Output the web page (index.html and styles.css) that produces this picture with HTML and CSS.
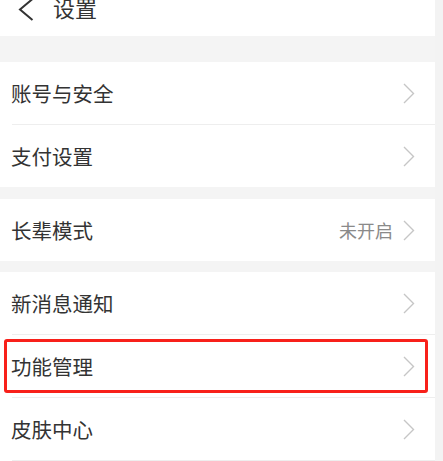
FILE: index.html
```html
<!DOCTYPE html>
<html lang="zh-CN">
<head>
<meta charset="utf-8">
<title>设置</title>
<link rel="stylesheet" href="styles.css">
</head>
<body>
<div class="screen">
  <main class="page">
    <header class="topbar">
      <svg class="back" width="16" height="22" viewBox="0 0 16 22">
        <polyline points="14.5,-1 2,9.5 14.5,20" fill="none" stroke="#333" stroke-width="2"/>
      </svg>
      <h1 class="title">设置</h1>
    </header>
    <div class="gap gap-top"></div>
    <section class="group">
      <div class="row"><span class="label">账号与安全</span><span class="right"><svg class="chev" width="12" height="21" viewBox="0 0 12 21"><polyline points="1,1 10.5,10.5 1,20" fill="none" stroke="#c6c6c6" stroke-width="1.4"/></svg></span></div>
      <div class="divider"></div>
      <div class="row"><span class="label">支付设置</span><span class="right"><svg class="chev" width="12" height="21" viewBox="0 0 12 21"><polyline points="1,1 10.5,10.5 1,20" fill="none" stroke="#c6c6c6" stroke-width="1.4"/></svg></span></div>
    </section>
    <div class="gap"></div>
    <section class="group">
      <div class="row"><span class="label">长辈模式</span><span class="right"><span class="value">未开启</span><svg class="chev" width="12" height="21" viewBox="0 0 12 21"><polyline points="1,1 10.5,10.5 1,20" fill="none" stroke="#c6c6c6" stroke-width="1.4"/></svg></span></div>
    </section>
    <div class="gap gap-sm"></div>
    <section class="group">
      <div class="row"><span class="label">新消息通知</span><span class="right"><svg class="chev" width="12" height="21" viewBox="0 0 12 21"><polyline points="1,1 10.5,10.5 1,20" fill="none" stroke="#c6c6c6" stroke-width="1.4"/></svg></span></div>
      <div class="divider"></div>
      <div class="row highlighted"><span class="label">功能管理</span><span class="right"><svg class="chev" width="12" height="21" viewBox="0 0 12 21"><polyline points="1,1 10.5,10.5 1,20" fill="none" stroke="#c6c6c6" stroke-width="1.4"/></svg></span><span class="mark"></span></div>
      <div class="divider"></div>
      <div class="row"><span class="label">皮肤中心</span><span class="right"><svg class="chev" width="12" height="21" viewBox="0 0 12 21"><polyline points="1,1 10.5,10.5 1,20" fill="none" stroke="#c6c6c6" stroke-width="1.4"/></svg></span></div>
      <div class="divider"></div>
    </section>
  </main>
  <aside class="edge"></aside>
</div>
</body>
</html>
```

FILE: styles.css
```css
* { box-sizing: border-box; }
html, body {
  margin: 0;
  padding: 0;
  background: #f4f4f4;
  font-family: "Noto Sans CJK SC", "Noto Sans", sans-serif;
  color: #333;
  overflow: hidden;
}
.screen {
  display: flex;
  width: 443px;
  height: 461px;
  overflow: hidden;
}
.page {
  width: 435px;
  flex: none;
  display: flex;
  flex-direction: column;
  background: #f4f4f4;
}
.edge {
  flex: 1;
  background: #f3f3f3;
}
.topbar {
  height: 36px;
  background: #fff;
  display: flex;
  align-items: flex-start;
  padding-left: 18px;
  overflow: hidden;
}
.back {
  flex: none;
  margin-top: 0;
}
.title {
  margin: -4px 0 0 19px;
  font-size: 22px;
  line-height: 22px;
  font-weight: 400;
  color: #333;
}
.gap { height: 12px; flex: none; }
.gap-top { height: 26px; }
.gap-sm { height: 11px; }
.group {
  background: #fff;
  display: flex;
  flex-direction: column;
}
.row {
  position: relative;
  height: 62px;
  display: flex;
  align-items: center;
  justify-content: space-between;
  padding: 0 20px 0 11px;
}
.label {
  font-size: 20.5px;
  color: #333;
  line-height: 1;
}
.right {
  display: flex;
  align-items: center;
}
.value {
  font-size: 18px;
  color: #8a8a8a;
  margin-right: 10px;
  line-height: 1;
}
.chev { display: block; }
.divider {
  height: 1px;
  margin-left: 12px;
  background: #eeeeee;
}
.mark {
  position: absolute;
  left: 4px;
  top: 4px;
  width: 424px;
  height: 54px;
  border: 3px solid #f8201a;
  border-radius: 3px;
  pointer-events: none;
}
```
